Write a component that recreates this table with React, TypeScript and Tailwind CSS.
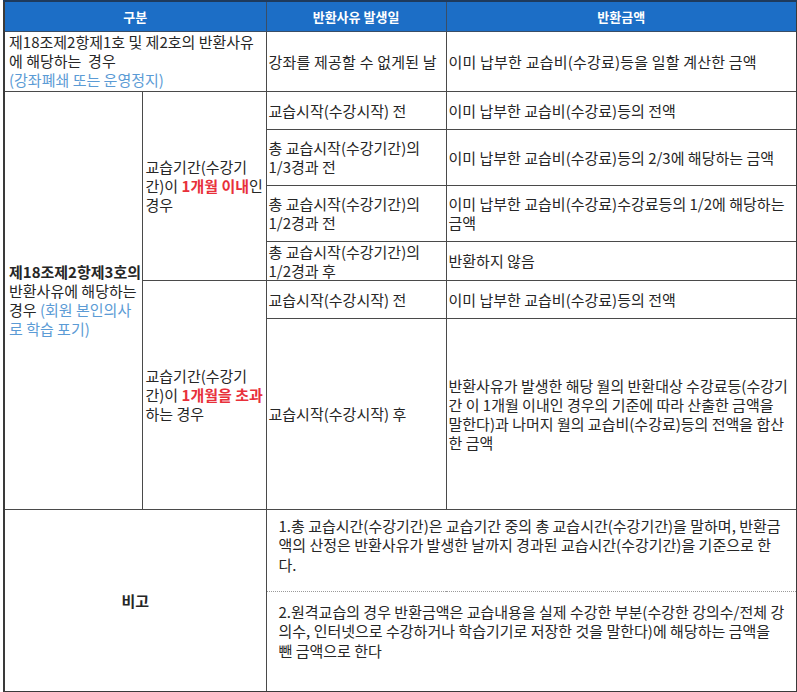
import React from "react"

const font = { fontFamily: '"Noto Sans CJK KR", "Noto Sans", sans-serif' }

const td = "border border-[#4a4a4a] align-middle px-[2px] leading-[19px]"

export default function App() {
    return (
        <div className="w-[797px] h-[692px] bg-white pl-[3px] pt-0 text-[15px] text-[#262626]" style={font}>
            <table className="table-fixed border-collapse w-[793px] border-2 border-[#3a3a3a]">
                <colgroup>
                    <col className="w-[138px]" />
                    <col className="w-[124px]" />
                    <col className="w-[180px]" />
                    <col className="w-[351px]" />
                </colgroup>
                <thead>
                    {/* Header */}
                    <tr className="h-[30px] bg-[#1c6ec6] text-white text-[13px] font-bold">
                        <th colSpan={2} className="border border-[#3a4e66] border-t-2 border-t-[#1e3a5c]">구분</th>
                        <th className="border border-[#3a4e66] border-t-2 border-t-[#1e3a5c]">반환사유 발생일</th>
                        <th className="border border-[#3a4e66] border-t-2 border-t-[#1e3a5c]">반환금액</th>
                    </tr>
                </thead>
                <tbody>
                    <tr className="h-[60px]">
                        <td colSpan={2} className={`${td} !align-top pl-[4px] pt-0 leading-[19.5px]`}>
                            제18조제2항제1호 및 제2호의 반환사유<br />
                            에 해당하는&nbsp; 경우<br />
                            <span className="text-[#5b9bd5]">(강좌폐쇄 또는 운영정지)</span>
                        </td>
                        <td className={`${td} whitespace-nowrap tracking-[0.2px]`}>강좌를 제공할 수 없게된 날</td>
                        <td className={`${td} tracking-[0.2px]`}>이미 납부한 교습비(수강료)등을 일할 계산한 금액</td>
                    </tr>
                    <tr className="h-[38px]">
                        <td rowSpan={6} className={`${td} pl-[4px] leading-[18.5px] whitespace-nowrap`}>
                            <span className="font-bold">제18조제2항제3호의</span><br />
                            반환사유에 해당하는<br />
                            경우 <span className="text-[#5b9bd5]">(회원 본인의사<br />로 학습 포기)</span>
                        </td>
                        <td rowSpan={4} className={`${td} pl-[3px] whitespace-nowrap`}>
                            교습기간(수강기<br />
                            간)이 <span className="font-bold text-[#e8303a]">1개월 이내</span>인<br />
                            경우
                        </td>
                        <td className={td}>교습시작(수강시작) 전</td>
                        <td className={td}>이미 납부한 교습비(수강료)등의 전액</td>
                    </tr>
                    <tr className="h-[56px]">
                        <td className={td}>총 교습시작(수강기간)의<br />1/3경과 전</td>
                        <td className={td}>이미 납부한 교습비(수강료)등의 2/3에 해당하는 금액</td>
                    </tr>
                    <tr className="h-[56px]">
                        <td className={td}>총 교습시작(수강기간)의<br />1/2경과 전</td>
                        <td className={`${td} whitespace-nowrap`}>이미 납부한 교습비(수강료)수강료등의 1/2에 해당하는<br />금액</td>
                    </tr>
                    <tr className="h-[38px]">
                        <td className={td}>총 교습시작(수강기간)의<br />1/2경과 후</td>
                        <td className={td}>반환하지 않음</td>
                    </tr>
                    <tr className="h-[38px]">
                        <td rowSpan={2} className={`${td} pl-[3px] whitespace-nowrap`}>
                            교습기간(수강기<br />
                            간)이 <span className="font-bold text-[#e8303a]">1개월을 초과</span><br />
                            하는 경우
                        </td>
                        <td className={td}>교습시작(수강시작) 전</td>
                        <td className={td}>이미 납부한 교습비(수강료)등의 전액</td>
                    </tr>
                    <tr className="h-[191px]">
                        <td className={td}>교습시작(수강시작) 후</td>
                        <td className={`${td} whitespace-nowrap`}>
                            반환사유가 발생한 해당 월의 반환대상 수강료등(수강기<br />
                            간 이 1개월 이내인 경우의 기준에 따라 산출한 금액을<br />
                            말한다)과 나머지 월의 교습비(수강료)등의 전액을 합산<br />
                            한 금액
                        </td>
                    </tr>

                    {/* 비고 */}
                    <tr className="h-[82px]">
                        <td colSpan={2} rowSpan={2} className={`${td} text-center font-bold`}>비고</td>
                        <td colSpan={2} className="border-l border-r border-[#4a4a4a] border-b border-b-[#9a9a9a] border-dotted align-top pl-[12px] pt-[6px] leading-[19.5px] whitespace-nowrap">
                            1.총 교습시간(수강기간)은 교습기간 중의 총 교습시간(수강기간)을 말하며, 반환금<br />
                            액의 산정은 반환사유가 발생한 날까지 경과된 교습시간(수강기간)을 기준으로 한<br />
                            다.
                        </td>
                    </tr>
                    <tr className="h-[101px]">
                        <td colSpan={2} className="border-l border-[#4a4a4a] align-top pl-[12px] pt-[10px] leading-[19.5px] whitespace-nowrap">
                            2.원격교습의 경우 반환금액은 교습내용을 실제 수강한 부분(수강한 강의수/전체 강<br />
                            의수, 인터넷으로 수강하거나 학습기기로 저장한 것을 말한다)에 해당하는 금액을<br />
                            뺀 금액으로 한다
                        </td>
                    </tr>
                </tbody>
            </table>
        </div>
    )
}
